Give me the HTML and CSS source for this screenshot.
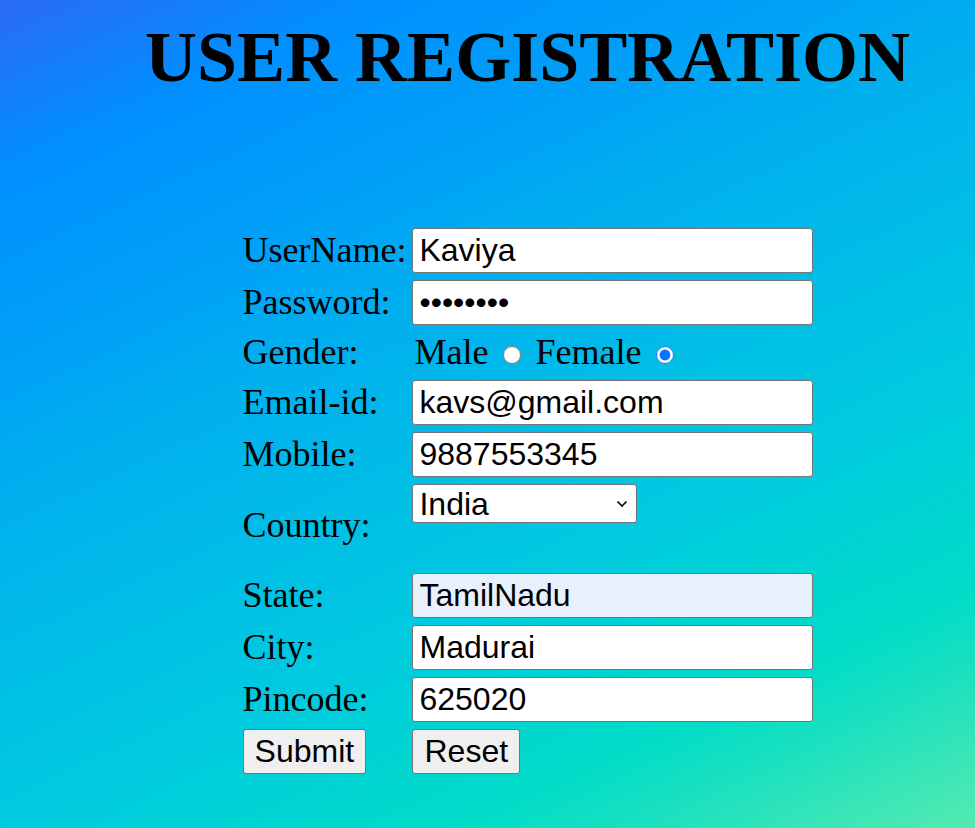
FILE: index.html
```html
<!DOCTYPE html>
<html lang="en">
<head>
<meta charset="utf-8">
<title>User Registration</title>
<link rel="stylesheet" href="styles.css">
</head>
<body>
<div class="page">
  <h1 class="title">USER REGISTRATION</h1>
  <form class="reg-form">
    <label class="lbl" for="un">UserName:</label>
    <div class="field"><input class="txt" id="un" type="text" value="Kaviya"></div>

    <label class="lbl" for="pw">Password:</label>
    <div class="field"><input class="txt" id="pw" type="password" value="kaviya12"></div>

    <span class="lbl">Gender:</span>
    <div class="field gender">Male <input class="radio" type="radio" name="g"> Female <input class="radio" type="radio" name="g" checked></div>

    <label class="lbl" for="em">Email-id:</label>
    <div class="field"><input class="txt" id="em" type="text" value="kavs@gmail.com"></div>

    <label class="lbl" for="mo">Mobile:</label>
    <div class="field"><input class="txt" id="mo" type="text" value="9887553345"></div>

    <label class="lbl" for="co">Country:</label>
    <div class="field country"><select class="sel" id="co"><option>India</option><option>USA</option><option>UK</option></select></div>

    <label class="lbl" for="st">State:</label>
    <div class="field"><input class="txt autofill" id="st" type="text" value="TamilNadu"></div>

    <label class="lbl" for="ci">City:</label>
    <div class="field"><input class="txt" id="ci" type="text" value="Madurai"></div>

    <label class="lbl" for="pc">Pincode:</label>
    <div class="field"><input class="txt" id="pc" type="text" value="625020"></div>

    <div class="btn-cell"><button class="btn" type="button">Submit</button></div>
    <div class="btn-cell"><button class="btn" type="reset">Reset</button></div>
  </form>
</div>
</body>
</html>
```

FILE: styles.css
```css
html, body {
  height: 100%;
}

body {
  margin: 0;
  background: linear-gradient(155deg,
    #2b6af5 0%,
    #0090ff 14%,
    #00a2f6 30%,
    #00acf0 36%,
    #00cbdf 65%,
    #00dcc8 81%,
    #18e0c0 87%,
    #55eab0 100%);
  font-family: "Liberation Serif", "Times New Roman", serif;
  color: #000;
}

.page {
  padding-left: 88px;
  width: 879px;
  display: flex;
  flex-direction: column;
  align-items: center;
}

.title {
  margin: 17px 0 0;
  font-family: "Liberation Serif", "Times New Roman", serif;
  font-weight: bold;
  font-size: 72px;
  line-height: 80px;
  white-space: nowrap;
}

.reg-form {
  margin-top: 131px;
  margin-left: 1px;
  display: grid;
  grid-template-columns: auto auto;
  column-gap: 6px;
  row-gap: 7px;
  align-items: center;
}

.lbl {
  font-size: 36px;
  line-height: 41px;
  white-space: nowrap;
}

.field {
  display: flex;
  align-items: center;
  min-height: 41px;
}

.txt {
  box-sizing: border-box;
  width: 401px;
  height: 45px;
  margin: 0;
  padding: 0 6px;
  border: 1px solid #767676;
  border-radius: 3px;
  background: #fff;
  font-family: "Liberation Sans", Arial, sans-serif;
  font-size: 32px;
  color: #000;
}

.txt.autofill {
  background: #e8f0fe;
}

.gender {
  display: block;
  font-size: 36px;
  line-height: 41px;
  padding-left: 2px;
  white-space: nowrap;
}

.radio {
  width: 18px;
  height: 18px;
  margin: 0 5px 0 6px;
  vertical-align: 0;
}

.country {
  align-items: flex-start;
  min-height: 82px;
}

.sel {
  box-sizing: border-box;
  width: 225px;
  height: 39px;
  margin: 0;
  padding: 0 30px 0 6px;
  border: 1px solid #767676;
  border-radius: 3px;
  -webkit-appearance: none;
  appearance: none;
  background-color: #fff;
  background-image: url("data:image/svg+xml,%3Csvg xmlns='http://www.w3.org/2000/svg' width='12' height='8' viewBox='0 0 12 8'%3E%3Cpath d='M1.5 1.5 L6 6 L10.5 1.5' fill='none' stroke='%23000' stroke-width='1.6'/%3E%3C/svg%3E");
  background-repeat: no-repeat;
  background-position: right 8px center;
  background-size: 12px 8px;
  font-family: "Liberation Sans", Arial, sans-serif;
  font-size: 32px;
  color: #000;
}

.btn-cell {
  display: flex;
}

.btn {
  box-sizing: border-box;
  height: 45px;
  margin: 0;
  padding: 0 11px;
  border: 1px solid #767676;
  border-radius: 3px;
  background: #efefef;
  font-family: "Liberation Sans", Arial, sans-serif;
  font-size: 32px;
  color: #000;
}
```
